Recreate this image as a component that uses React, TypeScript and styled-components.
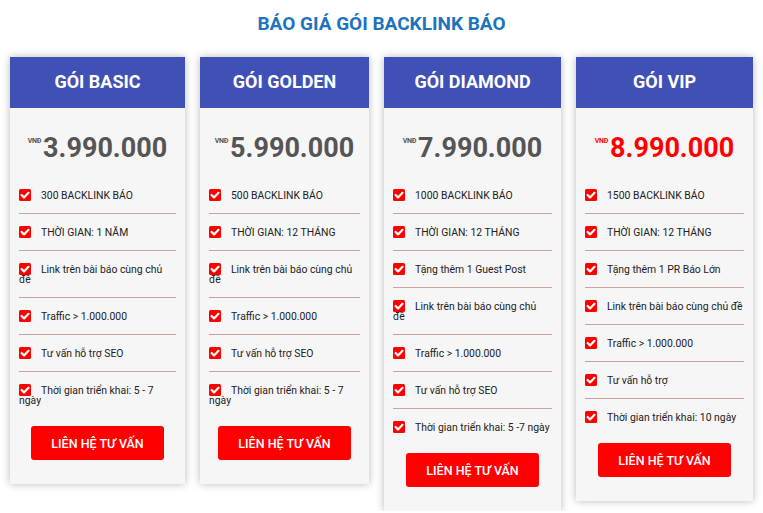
import styled, { createGlobalStyle } from 'styled-components'

const GlobalStyle = createGlobalStyle`
  body {
    margin: 0;
    background: #ffffff;
    font-family: Roboto, "Liberation Sans", Arial, sans-serif;
  }
`

interface IPlan {
  name: string
  price: string
  width: number
  hot?: boolean
  items: string[]
}

const plans: IPlan[] = [
  {
    name: 'GÓI BASIC',
    price: '3.990.000',
    width: 175,
    items: [
      '300 BACKLINK BÁO',
      'THỜI GIAN: 1 NĂM',
      'Link trên bài báo cùng chủ đề',
      'Traffic > 1.000.000',
      'Tư vấn hỗ trợ SEO',
      'Thời gian triển khai: 5 - 7 ngày'
    ]
  },
  {
    name: 'GÓI GOLDEN',
    price: '5.990.000',
    width: 169,
    items: [
      '500 BACKLINK BÁO',
      'THỜI GIAN: 12 THÁNG',
      'Link trên bài báo cùng chủ đề',
      'Traffic > 1.000.000',
      'Tư vấn hỗ trợ SEO',
      'Thời gian triển khai: 5 - 7 ngày'
    ]
  },
  {
    name: 'GÓI DIAMOND',
    price: '7.990.000',
    width: 177,
    items: [
      '1000 BACKLINK BÁO',
      'THỜI GIAN: 12 THÁNG',
      'Tặng thêm 1 Guest Post',
      'Link trên bài báo cùng chủ\nđề',
      'Traffic > 1.000.000',
      'Tư vấn hỗ trợ SEO',
      'Thời gian triển khai: 5 -7 ngày'
    ]
  },
  {
    name: 'GÓI VIP',
    price: '8.990.000',
    width: 177,
    hot: true,
    items: [
      '1500 BACKLINK BÁO',
      'THỜI GIAN: 12 THÁNG',
      'Tặng thêm 1 PR Báo Lớn',
      'Link trên bài báo cùng chủ đề',
      'Traffic > 1.000.000',
      'Tư vấn hỗ trợ',
      'Thời gian triển khai: 10 ngày'
    ]
  }
]

const Page = styled.div`
  padding: 10px 10px 0;
`

const Heading = styled.h2`
  margin: 0;
  height: 46px;
  padding-top: 1px;
  text-align: center;
  color: #1e73be;
  font-size: 19px;
  font-weight: 700;
  line-height: 26px;
`

const Grid = styled.div`
  display: flex;
  align-items: flex-start;
  gap: 15px;
`

const Card = styled.div<{ $w: number }>`
  width: ${p => p.$w}px;
  flex: none;
  background: #f6f6f6;
  box-shadow: 0 0 8px rgba(0, 0, 0, 0.28);
  padding-bottom: 24px;
`

const Header = styled.div`
  height: 51px;
  padding-bottom: 2px;
  box-sizing: border-box;
  background: #3f51b5;
  color: #ffffff;
  display: flex;
  align-items: center;
  justify-content: center;
  font-size: 18px;
  font-weight: 700;
`

const PriceRow = styled.div<{ $hot?: boolean }>`
  display: flex;
  justify-content: center;
  align-items: flex-start;
  padding: 27px 0 15px;
  color: ${p => (p.$hot ? '#ff0000' : '#555555')};
`

const Currency = styled.span`
  font-size: 7px;
  font-weight: 700;
  line-height: 7px;
  margin-top: 3px;
  margin-right: 2px;
  letter-spacing: -0.3px;
`

const Amount = styled.span`
  font-size: 27px;
  font-weight: 700;
  line-height: 27px;
`

const List = styled.ul`
  list-style: none;
  margin: 0;
  padding: 0 9px;
`

const Item = styled.li`
  padding: 12px 0 12px;
  font-size: 10.4px;
  line-height: 10px;
  color: #222222;
  white-space: pre-line;
  border-bottom: 1px solid #c9a3a3;

  &:last-child {
    border-bottom: none;
  }
`

const Check = styled.svg`
  width: 12px;
  height: 12px;
  vertical-align: -2px;
  margin-right: 10px;
`

const ButtonRow = styled.div`
  display: flex;
  justify-content: center;
  padding-top: 8px;
`

const Button = styled.button`
  width: 133px;
  height: 34px;
  border: none;
  border-radius: 3px;
  background: #ff0000;
  color: #ffffff;
  font-family: Roboto, "Liberation Sans", Arial, sans-serif;
  font-size: 12.5px;
  font-weight: 500;
  cursor: pointer;
`

function CheckIcon () {
  return (
    <Check viewBox='0 0 12 12'>
      <rect x='0' y='0' width='12' height='12' rx='1.5' fill='#ff0000' />
      <path
        d='M2.6 6 L5 8.4 L9.5 3.8'
        fill='none'
        stroke='#ffffff'
        strokeWidth='2.2'
        strokeLinecap='round'
        strokeLinejoin='round'
      />
    </Check>
  )
}

function PlanCard ({ plan }: { plan: IPlan }) {
  return (
    <Card $w={plan.width}>
      <Header>{plan.name}</Header>
      <PriceRow $hot={plan.hot}>
        <Currency>VNĐ</Currency>
        <Amount>{plan.price}</Amount>
      </PriceRow>
      <List>
        {plan.items.map((text, idx) => (
          <Item key={idx}>
            <CheckIcon />
            {text}
          </Item>
        ))}
      </List>
      <ButtonRow>
        <Button>LIÊN HỆ TƯ VẤN</Button>
      </ButtonRow>
    </Card>
  )
}

export default function App () {
  return (
    <Page>
      <GlobalStyle />
      <Heading>BÁO GIÁ GÓI BACKLINK BÁO</Heading>
      <Grid>
        {plans.map(plan => (
          <PlanCard key={plan.name} plan={plan} />
        ))}
      </Grid>
    </Page>
  )
}
